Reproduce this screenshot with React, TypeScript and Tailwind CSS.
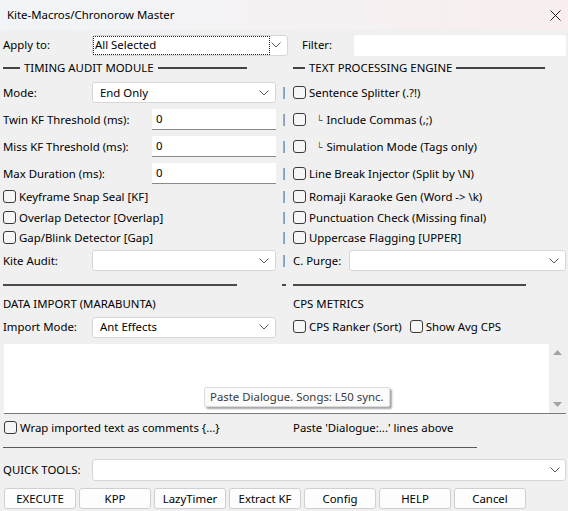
import React from 'react';

const font = { fontFamily: '"Segoe UI", "Noto Sans", "Open Sans", sans-serif' };

function Chevron() {
  return (
    <svg width="10" height="6" viewBox="0 0 10 6" className="shrink-0">
      <path d="M0.5 0.5 L5 5 L9.5 0.5" fill="none" stroke="#5a5a5a" strokeWidth="1" />
    </svg>
  );
}

function Check() {
  return <span className="w-[13px] h-[13px] shrink-0 rounded-[3px] border border-[#3a3a3a] bg-[#f6f6f6]" />;
}

function Mark() {
  return <span className="ml-auto mr-[5px] w-[2px] h-[12px] bg-gradient-to-r from-[#e0a468] to-[#5b9bd5]" />;
}

function Combo({ value = '', w }: { value?: string; w: string }) {
  return (
    <div className={`${w} h-[21px] shrink-0 flex items-center justify-between pl-[7px] pr-[6px] bg-white border border-[#d6d6d6] rounded-[3px]`}>
      <span>{value}</span>
      <Chevron />
    </div>
  );
}

function Field({ value }: { value: string }) {
  return (
    <div className="w-[124px] h-[21px] shrink-0 flex items-center pl-[4px] bg-white border-b border-[#8a8a8a]">
      {value}
    </div>
  );
}

function CheckRow({ label, indent }: { label: string; indent?: boolean }) {
  return (
    <div className="flex items-center gap-[3px]">
      <Check />
      {indent && <span className="ml-[7px] mr-[1px] text-[9px] text-[#333]">└</span>}
      <span>{label}</span>
    </div>
  );
}

function Header({ text, lead }: { text: string; lead: string }) {
  return (
    <div className="flex items-center gap-[4px]">
      <span className={`${lead} h-[2px] bg-[#444]`} />
      <span>{text}</span>
      <span className="w-[89px] h-[2px] bg-[#444]" />
    </div>
  );
}

const leftRows: React.ReactNode[] = [
  <><span className="w-[89px] shrink-0">Mode:</span><Combo value="End Only" w="w-[184px]" /><Mark /></>,
  <><span className="w-[149px] shrink-0">Twin KF Threshold (ms):</span><Field value="0" /><Mark /></>,
  <><span className="w-[149px] shrink-0">Miss KF Threshold (ms):</span><Field value="0" /><Mark /></>,
  <><span className="w-[149px] shrink-0">Max Duration (ms):</span><Field value="0" /><Mark /></>,
  <><CheckRow label="Keyframe Snap Seal [KF]" /><Mark /></>,
  <><CheckRow label="Overlap Detector [Overlap]" /><Mark /></>,
  <><CheckRow label="Gap/Blink Detector [Gap]" /><Mark /></>,
  <><span className="w-[89px] shrink-0">Kite Audit:</span><Combo w="w-[184px]" /><Mark /></>,
];

const rightRows: React.ReactNode[] = [
  <CheckRow label="Sentence Splitter (.?!)" />,
  <CheckRow label="Include Commas (,;)" indent />,
  <CheckRow label="Simulation Mode (Tags only)" indent />,
  <CheckRow label="Line Break Injector (Split by \N)" />,
  <CheckRow label="Romaji Karaoke Gen (Word -> \k)" />,
  <CheckRow label="Punctuation Check (Missing final)" />,
  <CheckRow label="Uppercase Flagging [UPPER]" />,
  <><span className="w-[56px] shrink-0">C. Purge:</span><Combo w="w-[217px]" /></>,
];

const rowH = ['h-[27px]', 'h-[27px]', 'h-[27px]', 'h-[27px]', 'h-[20px]', 'h-[21px]', 'h-[20px]', 'h-[25px]'];

const buttons = ['EXECUTE', 'KPP', 'LazyTimer', 'Extract KF', 'Config', 'HELP', 'Cancel'];

export default function App() {
  return (
    <div className="w-[568px] h-[511px] bg-[#f0f0f0] text-[11.4px] text-black overflow-hidden" style={font}>
      {/* title bar */}
      <div className="h-[30px] flex items-center justify-between pl-[7px] pr-[7px] bg-gradient-to-r from-[#f1f5f8] to-[#f8eeee]">
        <span>Kite-Macros/Chronorow Master</span>
        <svg width="11" height="11" viewBox="0 0 11 11">
          <path d="M0.5 0.5 L10.5 10.5 M10.5 0.5 L0.5 10.5" stroke="#222" strokeWidth="1" />
        </svg>
      </div>

      {/* apply / filter */}
      <div className="mt-[4px] h-[22px] flex items-center pl-[3px] pr-[2px]">
        <span className="w-[89px] shrink-0">Apply to:</span>
        <div className="w-[196px] h-[21px] flex items-center justify-between bg-white border border-[#d6d6d6] rounded-[3px] pr-[6px]">
          <span className="w-[177px] h-[19px] flex items-center pl-[1px] border border-dotted border-[#222]">All Selected</span>
          <Chevron />
        </div>
        <span className="ml-[14px] w-[52px] shrink-0">Filter:</span>
        <div className="flex-1 h-[21px] bg-white rounded-[2px]" />
      </div>

      {/* two column area */}
      <div className="mt-[1px] grid grid-cols-[290px_1fr]">
        <div className="h-[22px] pl-[3px] flex items-center"><Header text="TIMING AUDIT MODULE" lead="w-[17px]" /></div>
        <div className="h-[22px] pl-[3px] flex items-center"><Header text="TEXT PROCESSING ENGINE" lead="w-[12px]" /></div>
        {leftRows.map((l, i) => (
          <React.Fragment key={i}>
            <div className={`${rowH[i]} pl-[3px] flex items-center`}>{l}</div>
            <div className={`${rowH[i]} pl-[3px] pr-[2px] flex items-center`}>{rightRows[i]}</div>
          </React.Fragment>
        ))}
      </div>

      {/* separators */}
      <div className="mt-[11px] h-[2px] flex items-center">
        <span className="ml-[3px] w-[234px] h-[2px] bg-[#4a4a4a]" />
        <span className="ml-[45px] w-[4px] h-[2px] bg-[#4a4a4a]" />
        <span className="ml-[7px] w-[233px] h-[2px] bg-[#4a4a4a]" />
      </div>

      {/* import / cps */}
      <div className="mt-[8px] grid grid-cols-[290px_1fr]">
        <div className="h-[20px] pl-[3px] flex items-center">DATA IMPORT (MARABUNTA)</div>
        <div className="h-[20px] pl-[3px] flex items-center">CPS METRICS</div>
        <div className="h-[26px] pl-[3px] flex items-center">
          <span className="w-[89px] shrink-0">Import Mode:</span>
          <Combo value="Ant Effects" w="w-[184px]" />
        </div>
        <div className="h-[26px] pl-[3px] flex items-center gap-[8px]">
          <CheckRow label="CPS Ranker (Sort)" />
          <CheckRow label="Show Avg CPS" />
        </div>
      </div>

      {/* textarea */}
      <div className="relative mt-[4px] ml-[4px] mr-[2px] h-[70px] flex bg-white border-b border-[#7a7a7a]">
        <div className="flex-1" />
        <div className="w-[17px] bg-[#efefef] flex flex-col items-center justify-between py-[6px]">
          <svg width="9" height="5" viewBox="0 0 9 5"><path d="M0 5 L4.5 0 L9 5 Z" fill="#a3a3a3" /></svg>
          <svg width="9" height="5" viewBox="0 0 9 5"><path d="M0 0 L4.5 5 L9 0 Z" fill="#a3a3a3" /></svg>
        </div>
        <div className="absolute left-[200px] top-[43px] h-[20px] px-[5px] flex items-center bg-[#fbfbfb] border border-[#dcdcdc] rounded-[2px] text-[#3a3a3a] shadow-[2px_2px_2px_rgba(0,0,0,0.35)]">
          Paste Dialogue. Songs: L50 sync.
        </div>
      </div>

      {/* wrap row */}
      <div className="h-[27px] grid grid-cols-[290px_1fr]">
        <div className="pl-[4px] flex items-center"><CheckRow label="Wrap imported text as comments {...}" /></div>
        <div className="pl-[3px] flex items-center">Paste 'Dialogue:...' lines above</div>
      </div>

      <div className="mt-[6px] ml-[3px] w-[474px] h-px bg-[#5a5a5a]" />

      {/* quick tools */}
      <div className="mt-[11px] h-[22px] flex items-center pl-[3px] pr-[2px]">
        <span className="w-[89px] shrink-0">QUICK TOOLS:</span>
        <div className="flex-1 h-[22px] flex items-center justify-end pr-[5px] bg-white border border-[#d6d6d6] rounded-[3px]">
          <Chevron />
        </div>
      </div>

      {/* buttons */}
      <div className="mt-[7px] pl-[4px] flex gap-[3px]">
        {buttons.map(b => (
          <div key={b} className="w-[72px] h-[21px] flex items-center justify-center bg-[#fdfdfd] border border-[#d0d0d0] rounded-[3px]">
            {b}
          </div>
        ))}
      </div>
    </div>
  );
}
